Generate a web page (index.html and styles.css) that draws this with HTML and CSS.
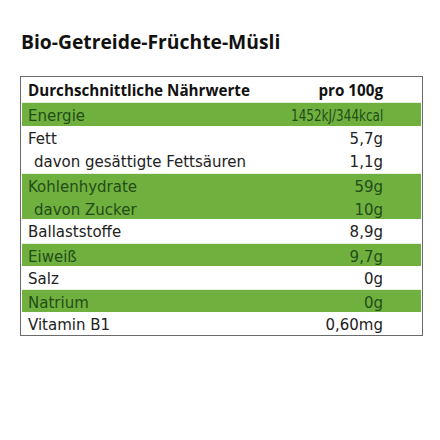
FILE: index.html
```
<!DOCTYPE html>
<html lang="de">
<head>
<meta charset="utf-8">
<title>Bio-Getreide-Früchte-Müsli</title>
<link rel="stylesheet" href="styles.css">
</head>
<body>
<h1 class="title">Bio-Getreide-Früchte-Müsli</h1>
<div class="naehrwerte">
  <div class="row head"><span>Durchschnittliche Nährwerte</span><span class="val">pro 100g</span></div>
  <div class="row green tall"><span>Energie</span><span class="val narrow">1452kJ/344kcal</span></div>
  <div class="row"><span>Fett</span><span class="val">5,7g</span></div>
  <div class="row tall"><span class="sub">davon gesättigte Fettsäuren</span><span class="val">1,1g</span></div>
  <div class="row green join"><span>Kohlenhydrate</span><span class="val">59g</span></div>
  <div class="row green"><span class="sub">davon Zucker</span><span class="val">10g</span></div>
  <div class="row tall"><span>Ballaststoffe</span><span class="val">8,9g</span></div>
  <div class="row green"><span>Eiweiß</span><span class="val">9,7g</span></div>
  <div class="row"><span>Salz</span><span class="val">0g</span></div>
  <div class="row green"><span>Natrium</span><span class="val">0g</span></div>
  <div class="row"><span>Vitamin B1</span><span class="val">0,60mg</span></div>
</div>
</body>
</html>
```
FILE: styles.css
```
*{
	margin:0;
	padding:0;
	box-sizing:border-box;
	}
body{
	background:#fff;
	font-family:"DejaVu Sans","Noto Sans",sans-serif;
	color:#222;
	padding:29px 17px 0 20px;
	}
.title{
	font-family:"Open Sans","Noto Sans",sans-serif;
	font-size:19.3px;
	font-weight:bold;
	line-height:26px;
	margin-left:1px;
	margin-bottom:21px;
	color:#111;
	}
.naehrwerte{
	border:1px solid #6a6a6a;
	padding:0 1px 0 1px;
	}
.row{
	display:flex;
	justify-content:space-between;
	align-items:flex-start;
	height:23px;
	font-size:15px;
	line-height:17px;
	padding:5px 38px 0 6px;
	}
.row.tall{
	height:24px;
	}
.row.head{
	height:25px;
	padding-top:4px;
	font-family:"Open Sans","Noto Sans",sans-serif;
	font-size:15.2px;
	line-height:19px;
	font-weight:bold;
	color:#111;
	}
.row.green{
	background:#70b03f;
	color:#234d17;
	border-top:1px solid #e6f0df;
	}
.row.green.join + .row.green{
	border-top:none;
	padding-top:6px;
	}
.sub{
	padding-left:6px;
	}
.narrow{
	display:inline-block;
	transform:scaleX(0.8);
	transform-origin:right center;
	}
```
